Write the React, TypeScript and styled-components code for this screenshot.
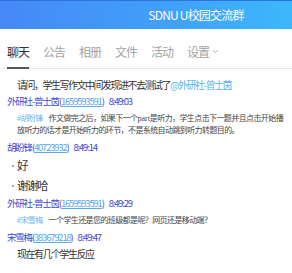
import React from "react";
import styled, { createGlobalStyle } from "styled-components";

const Global = createGlobalStyle`
  html, body { margin: 0; padding: 0; background: #fff; }
  body { font-family: "Noto Sans CJK SC", "Noto Sans", sans-serif; }
  * { box-sizing: border-box; }
`;

const Page = styled.div`
  width: 292px;
  height: 273px;
  overflow: hidden;
  background: #fff;
`;

const TitleBar = styled.header`
  height: 29px;
  background: linear-gradient(90deg, #4688f7 0%, #40a2f9 60%, #3cb8fa 100%);
  border-top: 1px solid #2f72dc;
  padding-left: 100px;
  text-align: center;
  color: #fff;
  font-size: 12px;
  letter-spacing: -0.8px;
  line-height: 28px;
`;

const Tabs = styled.nav`
  height: 40px;
  display: flex;
  align-items: stretch;
  gap: 14px;
  padding-left: 7px;
  border-bottom: 1px solid #e9e9e9;
`;

const Tab = styled.div<{ $active?: boolean }>`
  display: flex;
  align-items: center;
  gap: 3px;
  padding-top: 6px;
  margin-bottom: -1px;
  font-size: 12px;
  letter-spacing: -1px;
  color: ${(p) => (p.$active ? "#333" : "#a3a3a3")};
  border-bottom: 2px solid ${(p) => (p.$active ? "#555" : "transparent")};
`;

const Feed = styled.main`
  padding: 7px 4px 0 0;
`;

const Body = styled.div`
  padding-left: 17px;
  font-size: 10px;
  letter-spacing: -1.5px;
  line-height: 17px;
  color: #333;
  white-space: nowrap;
`;

const Mention = styled.span`
  color: #5ab2f0;
`;

const Quote = styled.div`
  padding: 4px 0 2px 17px;
  font-family: "Liberation Serif", "Noto Sans CJK SC", serif;
  font-size: 8px;
  letter-spacing: -0.6px;
  line-height: 12px;
  color: #444;
  white-space: nowrap;
`;

const Latin = styled.span`
  letter-spacing: 0;
`;

const QuoteTag = styled.span`
  color: #6fb6ee;
  margin-right: 6px;
`;

const Head = styled.div`
  padding-left: 7px;
  font-size: 9.5px;
  letter-spacing: -1.2px;
  line-height: 16px;
  color: #3c48d2;
  white-space: nowrap;
`;

const Uid = styled.span`
  color: #5aa8e8;
  text-decoration: underline;
`;

const Time = styled.span`
  margin-left: 5px;
`;

const Bullets = styled.ul`
  list-style: none;
  margin: 0;
  padding: 0 0 0 17px;
`;

const Bullet = styled.li`
  position: relative;
  font-size: 11.5px;
  letter-spacing: -1.5px;
  line-height: 20px;
  color: #333;
  &::before {
    content: "";
    position: absolute;
    left: -5px;
    top: 10px;
    width: 2px;
    height: 2px;
    border-radius: 1px;
    background: #8a8a8a;
  }
`;

const Chevron = () => (
  <svg width="7" height="5" viewBox="0 0 7 5" fill="none">
    <path d="M1 1.2 L3.5 3.6 L6 1.2" stroke="#b5b5b5" strokeWidth="1" />
  </svg>
);

type Msg = { name: string; uid: string; time: string };

const Header = ({ name, uid, time }: Msg) => (
  <Head>
    {name}(<Uid>{uid}</Uid>)<Time>{time}</Time>
  </Head>
);

export default function App() {
  return (
    <Page>
      <Global />
      <TitleBar>SDNU U校园交流群</TitleBar>
      <Tabs>
        <Tab $active>聊天</Tab>
        <Tab>公告</Tab>
        <Tab>相册</Tab>
        <Tab>文件</Tab>
        <Tab>活动</Tab>
        <Tab>
          设置 <Chevron />
        </Tab>
      </Tabs>
      <Feed>
        <Body>
          请问，学生写作文中间发现进不去测试了<Mention>@外研社-曾士茵</Mention>
        </Body>
        <Header name="外研社-曾士茵" uid="1659593591" time="8:49:03" />
        <Quote>
          <QuoteTag>#胡盼锋</QuoteTag>作文做完之后，如果下一个<Latin>part</Latin>是听力，学生点击下一题并且点击开始播
          <br />
          放听力的话才是开始听力的环节，不是系统自动跳到听力转题目的。
        </Quote>
        <Header name="胡盼锋" uid="40723932" time="8:49:14" />
        <Bullets>
          <Bullet>好</Bullet>
          <Bullet>谢谢哈</Bullet>
        </Bullets>
        <Header name="外研社-曾士茵" uid="1659593591" time="8:49:29" />
        <Quote>
          <QuoteTag>#宋雪梅</QuoteTag>一个学生还是您的班级都是呢？网页还是移动端？
        </Quote>
        <Header name="宋雪梅" uid="383679218" time="8:49:47" />
        <Body>现在有几个学生反应</Body>
      </Feed>
    </Page>
  );
}
